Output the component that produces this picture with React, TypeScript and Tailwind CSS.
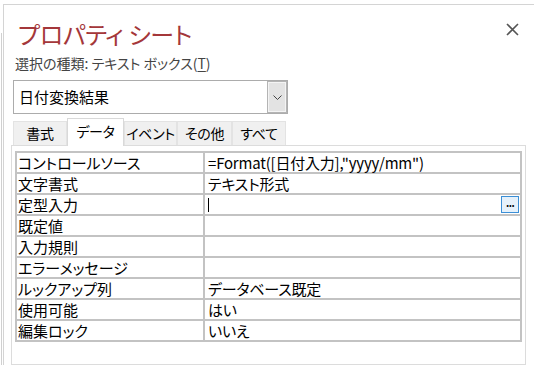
import { useState } from 'react';

const rows = [
  { label: 'コントロールソース', value: '=Format([日付入力],"yyyy/mm")' },
  { label: '文字書式', value: 'テキスト形式' },
  { label: '定型入力', value: '', active: true },
  { label: '既定値', value: '' },
  { label: '入力規則', value: '' },
  { label: 'エラーメッセージ', value: '' },
  { label: 'ルックアップ列', value: 'データベース既定' },
  { label: '使用可能', value: 'はい' },
  { label: '編集ロック', value: 'いいえ' },
];

const tabs = [
  { name: '書式', w: 'w-[54px]' },
  { name: 'データ', w: 'w-[57px]' },
  { name: 'イベント', w: 'w-[53px]' },
  { name: 'その他', w: 'w-[55px]' },
  { name: 'すべて', w: 'w-[54px]' },
];

export default function App() {
  const [tab, setTab] = useState('データ');

  return (
    <div className="w-[534px] h-[365px] overflow-hidden bg-white flex text-black font-['Noto_Sans_CJK_JP',sans-serif] [font-feature-settings:'palt']">
      {/* window edges */}
      <div className="w-px" />
      <div className="w-px mt-[33px] bg-[#d0d0d0]" />
      <div className="w-px" />

      <div className="flex-1 mt-[4px] border-t border-l border-[#d4d4d4] flex flex-col">
        {/* Header */}
        <div className="flex justify-between items-start pl-[14px] pr-[15px] pt-[14px]">
          <h1 className="text-[24px] leading-[29px] text-[#a4373a] tracking-[-0.3px]">プロパティ シート</h1>
          <svg width="13" height="13" viewBox="0 0 13 13" className="mt-[4px]">
            <path d="M1 1 L12 12 M12 1 L1 12" stroke="#555" strokeWidth="1.6" />
          </svg>
        </div>

        <p className="mt-[5px] pl-[11px] text-[14px] leading-[20px] text-[#444]">
          選択の種類: テキスト ボックス(<span className="underline underline-offset-2">T</span>)
        </p>

        {/* Object selector */}
        <div className="mt-[7px] ml-[9px] w-[275px] h-[34px] border border-[#acacac] flex items-stretch">
          <span className="flex-1 pl-[5px] text-[15px] leading-[32px]">日付変換結果</span>
          <div className="w-[20px] border border-[#b4b4b4] bg-[#e3e3e3] shadow-[inset_0_0_0_1px_#f4f4f4] flex items-center justify-center">
            <svg width="9" height="5" viewBox="0 0 9 5">
              <path d="M0.5 0.5 L4.5 4.5 L8.5 0.5" stroke="#444" strokeWidth="1" fill="none" />
            </svg>
          </div>
        </div>

        {/* Tabs */}
        <div className="mt-[4px] ml-[9px] h-[27px] flex items-end relative z-10">
          {tabs.map((t) => {
            const on = t.name === tab;
            return (
              <button
                key={t.name}
                onClick={() => setTab(t.name)}
                className={`${t.w} shrink-0 flex items-center justify-center whitespace-nowrap text-[14px] tracking-[-0.3px] border-t border-l border-r ${
                  on
                    ? 'h-[28px] -mb-px bg-white border-[#d9d9d9] pb-[2px]'
                    : 'h-[24px] bg-[#f0f0f0] border-[#e3e3e3]'
                }`}
              >
                {t.name}
              </button>
            );
          })}
        </div>

        {/* Property grid */}
        <div className="ml-[7px] w-[515px] flex-1 border border-[#dcdcdc] pt-[5px] pl-[3px]">
          <div className="w-[507px] border-2 border-b-0 border-[#c3c3c3] text-[15px]">
            {rows.map((r) => (
              <div key={r.label} className="flex h-[21px] border-b-2 border-[#c3c3c3]">
                <div className="w-[188px] border-r-2 border-[#c3c3c3] pl-px leading-[19px] whitespace-nowrap">
                  {r.label}
                </div>
                <div className="flex-1 flex items-center pl-[3px] whitespace-nowrap">
                  {r.active ? (
                    <>
                      <span className="w-px h-[14px] bg-black" />
                      <span className="flex-1" />
                      <span className="w-[18px] h-[17px] mr-px border border-[#3b8fd6] bg-[#e5f1fb] flex items-center justify-center">
                        <span className="text-[10px] leading-[10px] font-bold tracking-[-0.5px] -mt-[4px]">...</span>
                      </span>
                    </>
                  ) : (
                    <span className="leading-[19px] tracking-[-0.2px]">{r.value}</span>
                  )}
                </div>
              </div>
            ))}
          </div>
        </div>
      </div>
    </div>
  );
}
